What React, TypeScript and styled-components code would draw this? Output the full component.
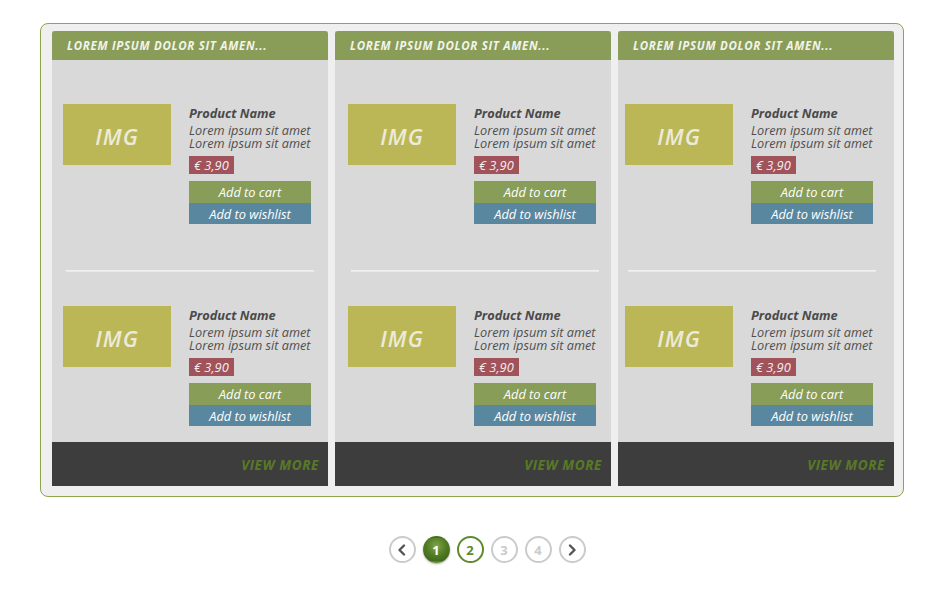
import React from "react";
import styled, { createGlobalStyle } from "styled-components";

const Global = createGlobalStyle`
  html, body { margin: 0; padding: 0; background: #ffffff; }
  body { font-family: "Open Sans", "DejaVu Sans", sans-serif; }
`;

const Page = styled.div`
  width: 940px;
  height: 600px;
  padding: 23px 0 0 40px;
  box-sizing: border-box;
`;

const Frame = styled.div`
  width: 864px;
  box-sizing: border-box;
  border: 1px solid #8aa64e;
  border-radius: 8px;
  background: #efefef;
  padding: 7px 9px 10px 11px;
  display: grid;
  grid-template-columns: repeat(3, 276px);
  column-gap: 7px;
`;

const Column = styled.div`
  display: flex;
  flex-direction: column;
  background: #d9d9d9;
`;

const Header = styled.div`
  height: 29px;
  background: #899d59;
  border-radius: 3px 3px 0 0;
  display: flex;
  align-items: center;
  padding-left: 15px;
  font-size: 11.5px;
  font-weight: 700;
  font-style: italic;
  color: #f2f4ea;
  letter-spacing: 0.7px;
`;

const Body = styled.div<{ $shift: number }>`
  height: 382px;
  box-sizing: border-box;
  padding: 44px 0 0 ${(p) => p.$shift}px;
  display: flex;
  flex-direction: column;
`;

const Product = styled.div`
  display: flex;
  align-items: flex-start;
  gap: 18px;
`;

const Img = styled.div`
  width: 108px;
  height: 61px;
  background: #bbb757;
  color: #ecebd9;
  font-size: 22px;
  font-style: italic;
  font-weight: 600;
  letter-spacing: 1px;
  display: flex;
  align-items: center;
  justify-content: center;
  padding-top: 2px;
  box-sizing: border-box;
`;

const Info = styled.div`
  display: flex;
  flex-direction: column;
  align-items: flex-start;
  padding-top: 1px;
`;

const Name = styled.div`
  font-size: 12.8px;
  font-weight: 700;
  font-style: italic;
  color: #4a4a4a;
  line-height: 16px;
`;

const Desc = styled.div`
  font-size: 12.7px;
  font-style: italic;
  color: #4f4f4f;
  line-height: 13px;
  margin-top: 3px;
  white-space: nowrap;
`;

const Price = styled.div`
  margin-top: 6px;
  height: 18px;
  padding: 0 5px;
  background: #a0535a;
  color: #f6eeee;
  font-size: 12.8px;
  font-style: italic;
  line-height: 18px;
`;

const Btn = styled.div<{ $bg: string; $h: number }>`
  width: 122px;
  height: ${(p) => p.$h}px;
  background: ${(p) => p.$bg};
  color: #ffffff;
  font-size: 12.8px;
  font-style: italic;
  display: flex;
  align-items: center;
  justify-content: center;
`;

const Buttons = styled.div`
  margin-top: 7px;
  display: flex;
  flex-direction: column;
`;

const Divider = styled.div`
  margin: 46px 0 34px 3px;
  height: 2px;
  width: 248px;
  background: linear-gradient(#f4f4f4, #e6e6e6);
`;

const Footer = styled.div`
  height: 44px;
  background: #3d3d3d;
  display: flex;
  align-items: center;
  justify-content: flex-end;
  padding-right: 9px;
  padding-top: 2px;
  box-sizing: border-box;
  font-size: 13.5px;
  font-weight: 700;
  font-style: italic;
  color: #587a26;
  letter-spacing: 0.6px;
`;

const Pager = styled.div`
  margin-top: 39px;
  display: flex;
  justify-content: center;
  gap: 7px;
  padding-right: 6px;
`;

const Dot = styled.div<{ $kind: "nav" | "active" | "current" | "idle" }>`
  width: 27px;
  height: 27px;
  box-sizing: border-box;
  border-radius: 50%;
  display: flex;
  align-items: center;
  justify-content: center;
  font-size: 13px;
  font-weight: 700;
  font-family: "Open Sans", sans-serif;
  border: 2px solid
    ${(p) =>
      p.$kind === "active" ? "transparent" : p.$kind === "current" ? "#5d8a2a" : "#c9cbcd"};
  color: ${(p) =>
    p.$kind === "active" ? "#ffffff" : p.$kind === "current" ? "#5d8a2a" : p.$kind === "nav" ? "#555" : "#c9cbcd"};
  background: ${(p) =>
    p.$kind === "active"
      ? "radial-gradient(circle at 50% 35%, #7fa548 0%, #4f7a22 55%, #3b5f17 100%)"
      : "#ffffff"};
  box-shadow: ${(p) => (p.$kind === "active" ? "0 1px 2px rgba(0,0,0,0.35)" : "none")};
`;

const Chevron = ({ dir }: { dir: "l" | "r" }) => (
  <svg width="10" height="12" viewBox="0 0 10 12">
    <path
      d={dir === "l" ? "M7 1.5 L2.5 6 L7 10.5" : "M3 1.5 L7.5 6 L3 10.5"}
      fill="none"
      stroke="#555"
      strokeWidth="2.4"
      strokeLinecap="round"
      strokeLinejoin="round"
    />
  </svg>
);

const ProductItem = () => (
  <Product>
    <Img>IMG</Img>
    <Info>
      <Name>Product Name</Name>
      <Desc>
        Lorem ipsum sit amet
        <br />
        Lorem ipsum sit amet
      </Desc>
      <Price>€ 3,90</Price>
      <Buttons>
        <Btn $bg="#889d57" $h={22}>Add to cart</Btn>
        <Btn $bg="#5a87a0" $h={21}>Add to wishlist</Btn>
      </Buttons>
    </Info>
  </Product>
);

const shifts = [11, 13, 7];

export default function App() {
  return (
    <>
      <Global />
      <Page>
        <Frame>
          {shifts.map((s, i) => (
            <Column key={i}>
              <Header>LOREM IPSUM DOLOR SIT AMEN...</Header>
              <Body $shift={s}>
                <ProductItem />
                <Divider />
                <ProductItem />
              </Body>
              <Footer>VIEW MORE</Footer>
            </Column>
          ))}
        </Frame>
        <Pager>
          <Dot $kind="nav"><Chevron dir="l" /></Dot>
          <Dot $kind="active">1</Dot>
          <Dot $kind="current">2</Dot>
          <Dot $kind="idle">3</Dot>
          <Dot $kind="idle">4</Dot>
          <Dot $kind="nav"><Chevron dir="r" /></Dot>
        </Pager>
      </Page>
    </>
  );
}
